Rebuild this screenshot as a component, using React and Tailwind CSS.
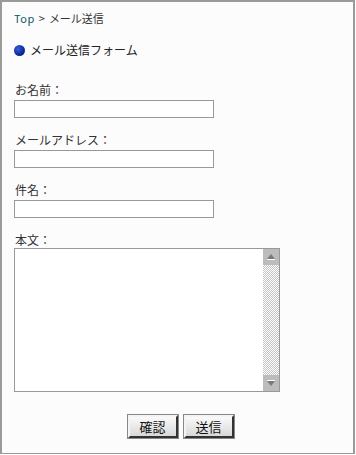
import { useState } from 'react';

const font = { fontFamily: '"Noto Sans CJK JP", "Liberation Sans", sans-serif' };

function Field({ label }) {
  return (
    <div className="flex flex-col">
      <label className="text-[12px] leading-[14px] text-[#333] h-[17px] pl-[1px]">{label}：</label>
      <input className="w-[200px] h-[18px] border border-[#999] bg-white outline-none text-[12px] px-1" />
    </div>
  );
}

export default function App() {
  const [body, setBody] = useState('');

  return (
    <div style={font} className="w-[355px] h-[454px] bg-[#fcfcfc] border border-[#9a9a9a] border-l-2 border-t-2 border-r-2 box-border">
      <div className="px-[12px] pt-[10px]">
        {/* Breadcrumb */}
        <div className="text-[11px] leading-[12px] text-[#333] flex items-center gap-[4px]">
          <a className="text-[#0f5a66] tracking-[0.5px]">Top</a>
          <span>&gt;</span>
          <span>メール送信</span>
        </div>

        {/* Heading */}
        <div className="mt-[19px] flex items-center gap-[5px] text-[12px] leading-[14px] text-[#222]">
          <span className="w-[11px] h-[11px] rounded-full bg-[radial-gradient(circle_at_35%_35%,#3a5fd8,#0a2a9a_60%,#041a6a)]"></span>
          <span>メール送信フォーム</span>
        </div>

        {/* Form */}
        <div className="mt-[26px] flex flex-col gap-[15px]">
          <Field label="お名前" />
          <Field label="メールアドレス" />
          <Field label="件名" />
          <div className="flex flex-col">
            <label className="text-[12px] leading-[14px] text-[#333] h-[15px] pl-[1px]">本文：</label>
            <div className="w-[266px] h-[144px] border border-[#999] bg-white flex">
              <textarea
                value={body}
                onChange={(e) => setBody(e.target.value)}
                className="flex-1 resize-none outline-none text-[12px] p-1 bg-white"
              />
              <div className="w-[16px] flex flex-col">
                <div className="h-[16px] bg-[#bcbcbc] flex items-center justify-center">
                  <svg width="10" height="8" viewBox="0 0 10 8">
                    <polygon points="5,1 9,6 1,6" fill="#7a7a7a" />
                    <rect x="1" y="6" width="8" height="1" fill="#fff" />
                  </svg>
                </div>
                <div className="flex-1 bg-[repeating-conic-gradient(#c4c4c4_0%_25%,#ffffff_0%_50%)] bg-[length:2px_2px]"></div>
                <div className="h-[16px] bg-[#bcbcbc] flex items-center justify-center">
                  <svg width="10" height="8" viewBox="0 0 10 8">
                    <rect x="1" y="1" width="8" height="1" fill="#fff" />
                    <polygon points="1,2 9,2 5,7" fill="#7a7a7a" />
                  </svg>
                </div>
              </div>
            </div>
          </div>
        </div>

        {/* Buttons */}
        <div className="mt-[23px] flex justify-center gap-[6px] pl-[6px]">
          <button className="w-[50px] h-[23px] text-[13px] leading-none text-[#111] border-2 border-t-[#f4f4f4] border-l-[#f4f4f4] border-r-[#333] border-b-[#333] bg-[linear-gradient(#fafafa,#d8d8d8)] outline outline-1 outline-[#888]">確認</button>
          <button className="w-[50px] h-[23px] text-[13px] leading-none text-[#111] border-2 border-t-[#f4f4f4] border-l-[#f4f4f4] border-r-[#333] border-b-[#333] bg-[linear-gradient(#fafafa,#d8d8d8)] outline outline-1 outline-[#888]">送信</button>
        </div>
      </div>
    </div>
  );
}
